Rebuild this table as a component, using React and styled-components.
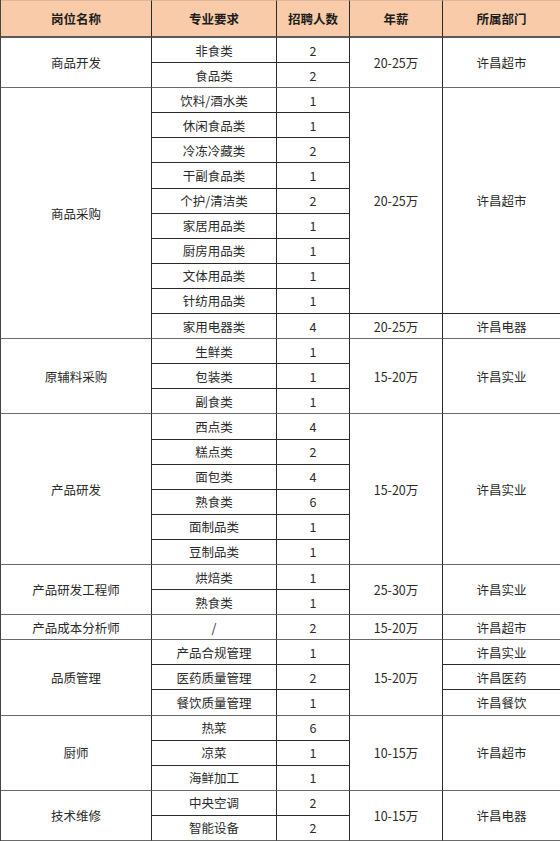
import React from "react";
import styled, { createGlobalStyle } from "styled-components";

const Global = createGlobalStyle`
  html, body { margin: 0; padding: 0; background: #fff; }
  body { font-family: "Noto Sans CJK SC", "Noto Sans", sans-serif; }
`;

const Table = styled.div`
  display: grid;
  width: 560px;
  box-sizing: border-box;
  border-left: 1px solid #444;
  grid-template-columns: 151px 125px 73px 93px 118px;
  grid-template-rows: 38px repeat(32, 25.1px);
  color: #2a2a2a;
  font-size: 12.5px;
`;

const Cell = styled.div`
  grid-column: ${(p) => p.$col};
  grid-row: ${(p) => p.$row} / span ${(p) => p.$span || 1};
  display: flex;
  align-items: center;
  justify-content: center;
  box-sizing: border-box;
  border-right: 1px solid #2b2b2b;
  border-bottom: ${(p) => (p.$group ? "1.5px solid #6a6a6a" : "1px solid #2b2b2b")};
  white-space: nowrap;
`;

const HeadCell = styled(Cell)`
  background: #f9cba9;
  font-weight: 700;
  font-size: 12.5px;
  color: #1e1e1e;
  border-bottom: 2px solid #5a5a5a;
  border-top: 1px solid #d8b89e;
`;

const groups = [
  { name: "商品开发", items: [["非食类", 2], ["食品类", 2]], pay: [["20-25万", 2]], dept: [["许昌超市", 2]] },
  {
    name: "商品采购",
    items: [
      ["饮料/酒水类", 1], ["休闲食品类", 1], ["冷冻冷藏类", 2], ["干副食品类", 1], ["个护/清洁类", 2],
      ["家居用品类", 1], ["厨房用品类", 1], ["文体用品类", 1], ["针纺用品类", 1], ["家用电器类", 4],
    ],
    pay: [["20-25万", 9], ["20-25万", 1]],
    dept: [["许昌超市", 9], ["许昌电器", 1]],
  },
  { name: "原辅料采购", items: [["生鲜类", 1], ["包装类", 1], ["副食类", 1]], pay: [["15-20万", 3]], dept: [["许昌实业", 3]] },
  {
    name: "产品研发",
    items: [["西点类", 4], ["糕点类", 2], ["面包类", 4], ["熟食类", 6], ["面制品类", 1], ["豆制品类", 1]],
    pay: [["15-20万", 6]],
    dept: [["许昌实业", 6]],
  },
  { name: "产品研发工程师", items: [["烘焙类", 1], ["熟食类", 1]], pay: [["25-30万", 2]], dept: [["许昌实业", 2]] },
  { name: "产品成本分析师", items: [["/", 2]], pay: [["15-20万", 1]], dept: [["许昌超市", 1]] },
  {
    name: "品质管理",
    items: [["产品合规管理", 1], ["医药质量管理", 2], ["餐饮质量管理", 1]],
    pay: [["15-20万", 3]],
    dept: [["许昌实业", 1], ["许昌医药", 1], ["许昌餐饮", 1]],
  },
  { name: "厨师", items: [["热菜", 6], ["凉菜", 1], ["海鲜加工", 1]], pay: [["10-15万", 3]], dept: [["许昌超市", 3]] },
  { name: "技术维修", items: [["中央空调", 2], ["智能设备", 2]], pay: [["10-15万", 2]], dept: [["许昌电器", 2]] },
];

const headers = ["岗位名称", "专业要求", "招聘人数", "年薪", "所属部门"];

export default function App() {
  const cells = [];
  let row = 2;
  groups.forEach((g, gi) => {
    const n = g.items.length;
    const last = row + n - 1;
    cells.push(
      <Cell key={`n${gi}`} $col={1} $row={row} $span={n} $group>
        {g.name}
      </Cell>
    );
    g.items.forEach(([label, count], i) => {
      const r = row + i;
      const isLast = r === last;
      cells.push(
        <Cell key={`a${gi}-${i}`} $col={2} $row={r} $group={isLast}>{label}</Cell>,
        <Cell key={`b${gi}-${i}`} $col={3} $row={r} $group={isLast}>{count}</Cell>
      );
    });
    let pr = row;
    g.pay.forEach(([v, s], i) => {
      cells.push(
        <Cell key={`p${gi}-${i}`} $col={4} $row={pr} $span={s} $group={pr + s - 1 === last}>{v}</Cell>
      );
      pr += s;
    });
    let dr = row;
    g.dept.forEach(([v, s], i) => {
      cells.push(
        <Cell key={`d${gi}-${i}`} $col={5} $row={dr} $span={s} $group={dr + s - 1 === last}>{v}</Cell>
      );
      dr += s;
    });
    row += n;
  });

  return (
    <>
      <Global />
      <Table>
        {headers.map((h, i) => (
          <HeadCell key={h} $col={i + 1} $row={1}>{h}</HeadCell>
        ))}
        {cells}
      </Table>
    </>
  );
}
